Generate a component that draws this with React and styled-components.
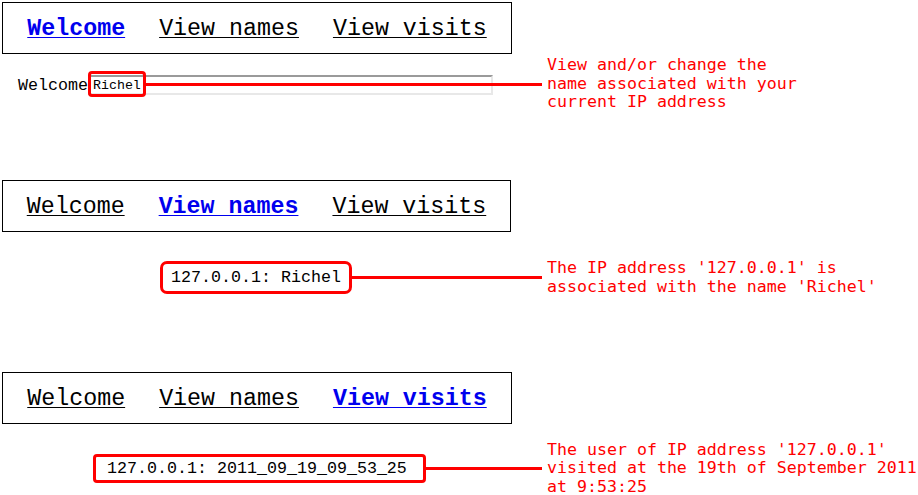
import React from "react";
import styled, { createGlobalStyle } from "styled-components";

const Global = createGlobalStyle`
  html, body { margin: 0; padding: 0; background: #ffffff; }
  body { font-family: "Liberation Mono", monospace; color: #000; }
`;

const Page = styled.div`
  width: 918px;
  height: 495px;
  overflow: hidden;
  padding-top: 2px;
  box-sizing: border-box;
`;

const Section = styled.section`
  margin-top: ${(p) => p.$top || 0}px;
`;

const NavBox = styled.nav`
  box-sizing: border-box;
  width: ${(p) => p.$width || 510}px;
  height: 52px;
  margin-left: 2px;
  padding-top: 2px;
  border: 1px solid #000;
  display: flex;
  align-items: center;
  justify-content: center;
  gap: 34px;
`;

const NavLink = styled.a`
  font-family: "Liberation Mono", monospace;
  font-size: 23.3px;
  text-decoration: underline;
  text-decoration-thickness: 1px;
  text-underline-offset: 2px;
  color: ${(p) => (p.$active ? "#0000ee" : "#000")};
  font-weight: ${(p) => (p.$active ? 700 : 400)};
  cursor: pointer;
`;

const CalloutRow = styled.div`
  display: flex;
  align-items: center;
  margin-top: ${(p) => p.$top || 0}px;
`;

const Stage = styled.div`
  width: 542px;
  flex: none;
  display: flex;
  align-items: center;
  box-sizing: border-box;
  padding-left: ${(p) => p.$indent || 0}px;
`;

const Note = styled.p`
  margin: 0 0 0 5px;
  font-family: "DejaVu Sans Mono", monospace;
  font-size: 16.6px;
  line-height: 18.7px;
  color: #ff0000;
  white-space: pre;
`;

const Label = styled.span`
  font-family: "Liberation Mono", monospace;
  font-size: 16.67px;
  padding-top: 2px;
`;

const InputWrap = styled.div`
  position: relative;
  width: 405px;
  height: 20px;
  margin-top: 2px;
`;

const TextInput = styled.input`
  box-sizing: border-box;
  width: 100%;
  height: 100%;
  margin: 0;
  padding: 0 3px;
  border-style: solid;
  border-width: 2px;
  border-color: #9a9a9a #e8e8e8 #e8e8e8 #9a9a9a;
  background: #fff;
  font-family: "Liberation Mono", monospace;
  font-size: 13.3px;
  color: #000;
  outline: none;
`;

const InputHighlight = styled.div`
  position: absolute;
  left: 0;
  top: -4px;
  width: 58px;
  height: 26px;
  box-sizing: border-box;
  border: 3px solid #ff0000;
  border-radius: 4px;
  pointer-events: none;
`;

const OverLeader = styled.div`
  position: absolute;
  left: 58px;
  top: calc(50% - 2px);
  width: 396px;
  height: 3px;
  background: #ff0000;
`;

const Highlight = styled.div`
  box-sizing: border-box;
  height: ${(p) => p.$h}px;
  display: flex;
  align-items: center;
  padding: 0 ${(p) => p.$pr}px 0 ${(p) => p.$pl}px;
  border: 3px solid #ff0000;
  border-radius: ${(p) => p.$r}px;
  font-family: "Liberation Mono", monospace;
  font-size: 16.67px;
  white-space: pre;
`;

const Leader = styled.div`
  flex: 1;
  height: 3px;
  background: #ff0000;
`;

function Nav({ active, width }) {
  const items = ["Welcome", "View names", "View visits"];
  return (
    <NavBox $width={width}>
      {items.map((t) => (
        <NavLink key={t} $active={t === active}>
          {t}
        </NavLink>
      ))}
    </NavBox>
  );
}

export default function App() {
  return (
    <Page>
      <Global />
      <Section>
        <Nav active="Welcome" />
        <CalloutRow $top={2}>
          <Stage $indent={18}>
            <Label>Welcome</Label>
            <InputWrap>
              <TextInput value="Richel" readOnly />
              <InputHighlight />
              <OverLeader />
            </InputWrap>
          </Stage>
          <Note>{"View and/or change the\nname associated with your\ncurrent IP address"}</Note>
        </CalloutRow>
      </Section>

      <Section $top={68}>
        <Nav active="View names" width={509} />
        <CalloutRow $top={27}>
          <Stage $indent={160}>
            <Highlight $h={33} $pl={8} $pr={8} $r={7}>
              127.0.0.1: Richel
            </Highlight>
            <Leader />
          </Stage>
          <Note>{"The IP address '127.0.0.1' is\nassociated with the name 'Richel'"}</Note>
        </CalloutRow>
      </Section>

      <Section $top={75}>
        <Nav active="View visits" />
        <CalloutRow $top={17}>
          <Stage $indent={93}>
            <Highlight $h={29} $pl={11} $pr={16} $r={4}>
              127.0.0.1: 2011_09_19_09_53_25
            </Highlight>
            <Leader />
          </Stage>
          <Note>{"The user of IP address '127.0.0.1'\nvisited at the 19th of September 2011\nat 9:53:25"}</Note>
        </CalloutRow>
      </Section>
    </Page>
  );
}
